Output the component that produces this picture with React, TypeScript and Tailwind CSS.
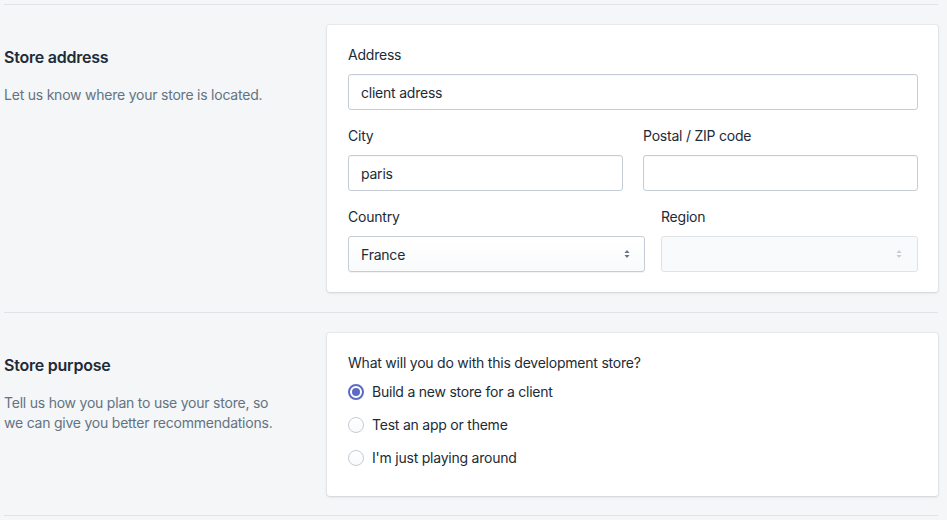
import React from "react";

const font = { fontFamily: "Inter, 'Noto Sans', sans-serif" };

function Label({ children }: { children: React.ReactNode }) {
  return <div className="text-[14px] leading-5 text-[#212b36] mb-[9px]">{children}</div>;
}

function TextField({ value }: { value?: string }) {
  return (
    <div className="h-[36px] rounded-[3px] border border-[#c4cdd5] bg-white shadow-[inset_0_1px_0_0_rgba(99,115,129,0.05)] px-[12px] flex items-center text-[14px] text-[#212b36]">
      {value}
    </div>
  );
}

function Arrows({ color }: { color: string }) {
  return (
    <svg width="8" height="12" viewBox="0 0 8 12" className="shrink-0">
      <path d="M1.5 5 L4 2 L6.5 5 Z" fill={color} />
      <path d="M1.5 7 L4 10 L6.5 7 Z" fill={color} />
    </svg>
  );
}

function Select({ value, disabled }: { value?: string; disabled?: boolean }) {
  return (
    <div
      className={
        disabled
          ? "h-[36px] rounded-[3px] border border-[#dfe3e8] bg-[#f9fafb] pl-[12px] pr-[14px] flex items-center justify-between text-[14px]"
          : "h-[36px] rounded-[3px] border border-[#c4cdd5] bg-gradient-to-b from-white to-[#f9fafb] shadow-[0_1px_0_0_rgba(22,29,37,0.05)] pl-[12px] pr-[13px] flex items-center justify-between text-[14px] text-[#212b36]"
      }
    >
      <span>{value}</span>
      <Arrows color={disabled ? "#c4cdd5" : "#637381"} />
    </div>
  );
}

function Radio({ checked, label }: { checked?: boolean; label: string }) {
  return (
    <div className="h-[33px] flex items-center">
      {checked ? (
        <div className="w-[16px] h-[16px] rounded-full border-[2px] border-[#5c6ac4] bg-white flex items-center justify-center">
          <div className="w-[8px] h-[8px] rounded-full bg-[#5c6ac4]" />
        </div>
      ) : (
        <div className="w-[16px] h-[16px] rounded-full border border-[#c4cdd5] bg-gradient-to-b from-white to-[#f9fafb]" />
      )}
      <span className="ml-[8px] text-[14px] leading-5 text-[#212b36]">{label}</span>
    </div>
  );
}

const card =
  "w-[611px] bg-white rounded-[3px] shadow-[0_0_0_1px_rgba(63,63,68,0.05),0_1px_3px_0_rgba(63,63,68,0.15)]";

export default function App() {
  return (
    <div className="min-h-[520px] w-[947px] bg-[#f4f6f8] tracking-[-0.014em]" style={font}>
      <div className="ml-[4px] w-[934px] pt-[4px]">
        <section className="border-t border-[#dfe3e8] py-[20px] flex">
          <div className="w-[323px] pt-[20px]">
            <h2 className="text-[16px] leading-6 font-semibold text-[#212b36]">Store address</h2>
            <p className="mt-[16px] text-[14px] leading-5 text-[#637381]">
              Let us know where your store is located.
            </p>
          </div>
          <div className={card + " pl-[21px] pr-[20px] py-[20px]"}>
            <Label>Address</Label>
            <TextField value="client adress" />
            <div className="mt-[16px] grid grid-cols-2 gap-5">
              <div>
                <Label>City</Label>
                <TextField value="paris" />
              </div>
              <div>
                <Label>Postal / ZIP code</Label>
                <TextField />
              </div>
            </div>
            <div className="mt-[16px] flex gap-4">
              <div className="w-[297px]">
                <Label>Country</Label>
                <Select value="France" />
              </div>
              <div className="flex-1">
                <Label>Region</Label>
                <Select disabled />
              </div>
            </div>
          </div>
        </section>
        <section className="border-t border-[#dfe3e8] pt-[20px] pb-[19px] flex">
          <div className="w-[323px] pt-[20px]">
            <h2 className="text-[16px] leading-6 font-semibold text-[#212b36]">Store purpose</h2>
            <p className="mt-[16px] text-[14px] leading-5 text-[#637381]">
              Tell us how you plan to use your store, so
              <br />
              we can give you better recommendations.
            </p>
          </div>
          <div className={card + " pl-[21px] pr-[20px] pt-[20px] pb-[22px]"}>
            <div className="text-[14px] leading-5 text-[#212b36] mb-[2px]">
              What will you do with this development store?
            </div>
            <Radio checked label="Build a new store for a client" />
            <Radio label="Test an app or theme" />
            <Radio label="I'm just playing around" />
          </div>
        </section>
        <div className="border-t border-[#dfe3e8]" />
      </div>
    </div>
  );
}
